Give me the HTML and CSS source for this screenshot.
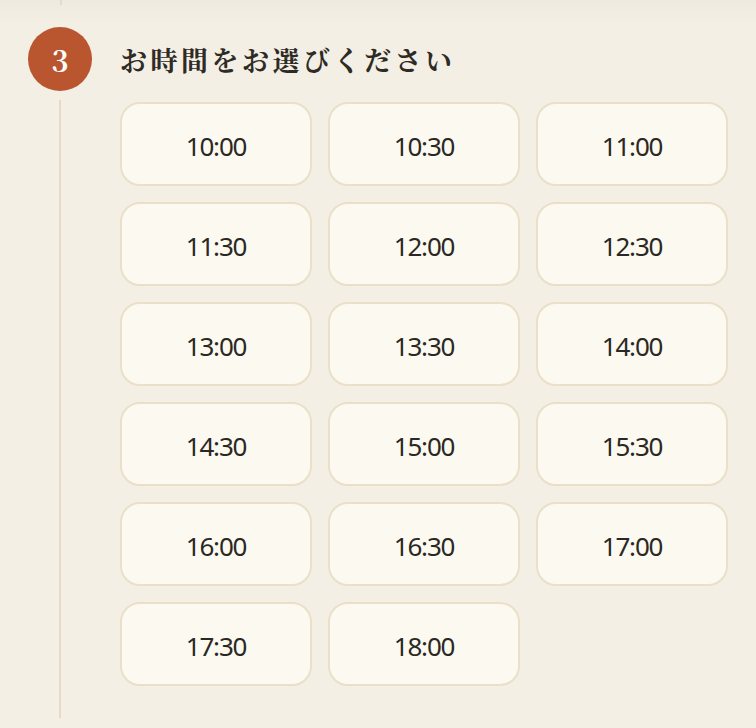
FILE: index.html
```html
<!DOCTYPE html>
<html lang="ja">
<head>
    <meta charset="UTF-8">
    <meta name="viewport" content="width=device-width, initial-scale=1.0">
    <title>ご予約 - お時間</title>
    <link rel="stylesheet" href="styles.css">
</head>
<body>
    <div class="page">
        <div class="rail-tail"></div>
        <section class="step">
            <div class="step-rail">
                <div class="step-num">3</div>
                <div class="step-line"></div>
            </div>
            <div class="step-body">
                <h2 class="step-title">お時間をお選びください</h2>
                <div class="time-grid">
                    <button class="time-slot">10:00</button>
                    <button class="time-slot">10:30</button>
                    <button class="time-slot">11:00</button>
                    <button class="time-slot">11:30</button>
                    <button class="time-slot">12:00</button>
                    <button class="time-slot">12:30</button>
                    <button class="time-slot">13:00</button>
                    <button class="time-slot">13:30</button>
                    <button class="time-slot">14:00</button>
                    <button class="time-slot">14:30</button>
                    <button class="time-slot">15:00</button>
                    <button class="time-slot">15:30</button>
                    <button class="time-slot">16:00</button>
                    <button class="time-slot">16:30</button>
                    <button class="time-slot">17:00</button>
                    <button class="time-slot">17:30</button>
                    <button class="time-slot">18:00</button>
                </div>
            </div>
        </section>
    </div>
</body>
</html>
```

FILE: styles.css
```css
html {
    background-color: #f3efe4;
}
body {
    margin: 0;
    background: linear-gradient(#eeeadf 0, #f3efe4 24px) no-repeat;
    font-family: "Noto Sans", "Noto Sans CJK JP", sans-serif;
    color: #2b2823;
}
.page {
    padding: 0 28px;
}
.rail-tail {
    width: 2px;
    height: 5px;
    margin-left: 32px;
    background-color: #e4dac7;
}
.step {
    display: grid;
    grid-template-columns: 64px 1fr;
    column-gap: 28px;
    margin-top: 22px;
}
.step-rail {
    display: flex;
    flex-direction: column;
    align-items: center;
}
.step-num {
    width: 64px;
    height: 64px;
    border-radius: 50%;
    background-color: #b9562f;
    color: #fff;
    font-family: "Noto Serif CJK JP", "Liberation Serif", serif;
    font-weight: bold;
    font-size: 29px;
    display: flex;
    align-items: center;
    justify-content: center;
}
.step-line {
    flex: 1;
    width: 2px;
    margin-top: 9px;
    background-color: #e4dac7;
}
.step-body {
    padding-bottom: 32px;
}
.step-title {
    height: 64px;
    margin: 0;
    display: flex;
    align-items: center;
    font-family: "Noto Serif CJK JP", "Liberation Serif", serif;
    font-size: 27px;
    font-weight: bold;
    letter-spacing: 3.5px;
    color: #2e2a24;
}
.time-grid {
    display: grid;
    grid-template-columns: repeat(3, 1fr);
    gap: 16px;
    margin-top: 11px;
}
.time-slot {
    height: 84px;
    border: 2px solid #ebdfc9;
    border-radius: 20px;
    background-color: #fcf9f0;
    font-family: "Noto Sans", sans-serif;
    font-size: 26px;
    letter-spacing: -1.2px;
    color: #2b2823;
    padding: 4px 0 0;
    cursor: pointer;
}
.time-slot:hover {
    border-color: #d9c7a6;
}
```
